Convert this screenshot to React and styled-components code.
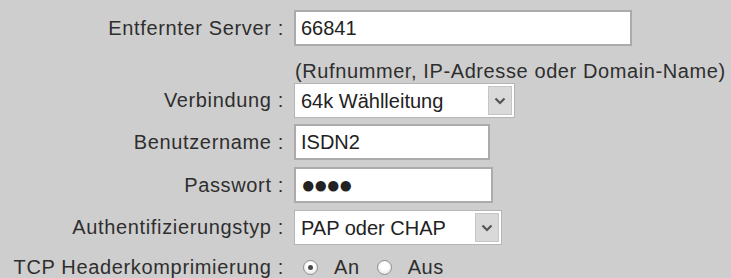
import React from "react";
import styled, { createGlobalStyle } from "styled-components";

const GlobalStyle = createGlobalStyle`
  body {
    margin: 0;
    background: #cecece;
    font-family: "Liberation Sans", Arial, sans-serif;
  }
`;

const Form = styled.form`
  width: 731px;
  height: 278px;
  padding-top: 10px;
  box-sizing: border-box;
  overflow: hidden;
`;

const Row = styled.div`
  display: flex;
  align-items: center;
  gap: 10px;
  margin-top: ${(p) => p.$top || 0}px;
  height: ${(p) => p.$height || 36}px;
`;

const Label = styled.label`
  width: 284px;
  flex: none;
  text-align: right;
  font-size: 20px;
  letter-spacing: 0.65px;
  color: #2e2e2e;
  white-space: nowrap;
`;

const Hint = styled.div`
  margin: 14px 0 0 295px;
  line-height: 23px;
  font-size: 20px;
  letter-spacing: 0.6px;
  color: #2e2e2e;
  white-space: nowrap;
`;

const TextInput = styled.input`
  box-sizing: border-box;
  width: ${(p) => p.$width}px;
  height: 100%;
  margin: 0;
  padding: 0 5px;
  border: 2px solid #ababab;
  background: #fff;
  font-family: "Liberation Sans", Arial, sans-serif;
  font-size: ${(p) => p.$size || 20}px;
  letter-spacing: ${(p) => p.$spacing || 0}px;
  color: #222;
  outline: none;
`;

const SelectWrap = styled.div`
  position: relative;
  box-sizing: border-box;
  width: ${(p) => p.$width}px;
  height: 100%;
  border: 1px solid #b5b5b5;
  background: #fff;
`;

const NativeSelect = styled.select`
  appearance: none;
  width: 100%;
  height: 100%;
  margin: 0;
  padding: 0 30px 0 6px;
  border: none;
  background: transparent;
  font-family: "Liberation Sans", Arial, sans-serif;
  font-size: 20px;
  color: #222;
  outline: none;
`;

const Arrow = styled.span`
  position: absolute;
  top: 2px;
  right: 2px;
  bottom: 2px;
  width: 24px;
  display: flex;
  align-items: center;
  justify-content: center;
  background: #d9d9d9;
  border: 1px solid #c6c6c6;
  box-sizing: border-box;
  pointer-events: none;
`;

const Radios = styled.div`
  display: flex;
  align-items: center;
  padding-left: 9px;
  font-size: 20px;
  letter-spacing: 0.6px;
  color: #2e2e2e;
`;

const RadioOption = styled.label`
  display: flex;
  align-items: center;
  gap: 16px;
  margin-right: 17px;
`;

const RadioDot = styled.span`
  box-sizing: border-box;
  width: 15px;
  height: 15px;
  border-radius: 50%;
  border: 1px solid #8e8e8e;
  background: radial-gradient(circle at 50% 40%, #ffffff 35%, #dcdcdc 100%);
  display: flex;
  align-items: center;
  justify-content: center;
  &::after {
    content: "";
    width: 5px;
    height: 5px;
    border-radius: 50%;
    background: ${(p) => (p.$checked ? "#4a4a4a" : "transparent")};
  }
`;

const Chevron = () => (
  <svg width="12" height="8" viewBox="0 0 12 8">
    <path d="M1.5 1.5 L6 6 L10.5 1.5" fill="none" stroke="#555" strokeWidth="2.2" />
  </svg>
);

const Select = ({ width, value }) => (
  <SelectWrap $width={width}>
    <NativeSelect defaultValue={value}>
      <option>{value}</option>
    </NativeSelect>
    <Arrow>
      <Chevron />
    </Arrow>
  </SelectWrap>
);

const App = () => (
  <>
    <GlobalStyle />
    <Form>
      <Row>
        <Label>Entfernter Server :</Label>
        <TextInput $width={338} defaultValue="66841" />
      </Row>
      <Hint>(Rufnummer, IP-Adresse oder Domain-Name)</Hint>
      <Row $height={35}>
        <Label>Verbindung :</Label>
        <Select width={221} value="64k Wählleitung" />
      </Row>
      <Row $top={6}>
        <Label>Benutzername :</Label>
        <TextInput $width={196} defaultValue="ISDN2" />
      </Row>
      <Row $top={7}>
        <Label>Passwort :</Label>
        <TextInput $width={199} $size={24} $spacing={-2} defaultValue="●●●●" />
      </Row>
      <Row $top={7} $height={35}>
        <Label>Authentifizierungstyp :</Label>
        <Select width={208} value="PAP oder CHAP" />
      </Row>
      <Row $top={10} $height={24}>
        <Label>TCP Headerkomprimierung :</Label>
        <Radios>
          <RadioOption>
            <RadioDot $checked />
            An
          </RadioOption>
          <RadioOption>
            <RadioDot />
            Aus
          </RadioOption>
        </Radios>
      </Row>
    </Form>
  </>
);

export default App;
